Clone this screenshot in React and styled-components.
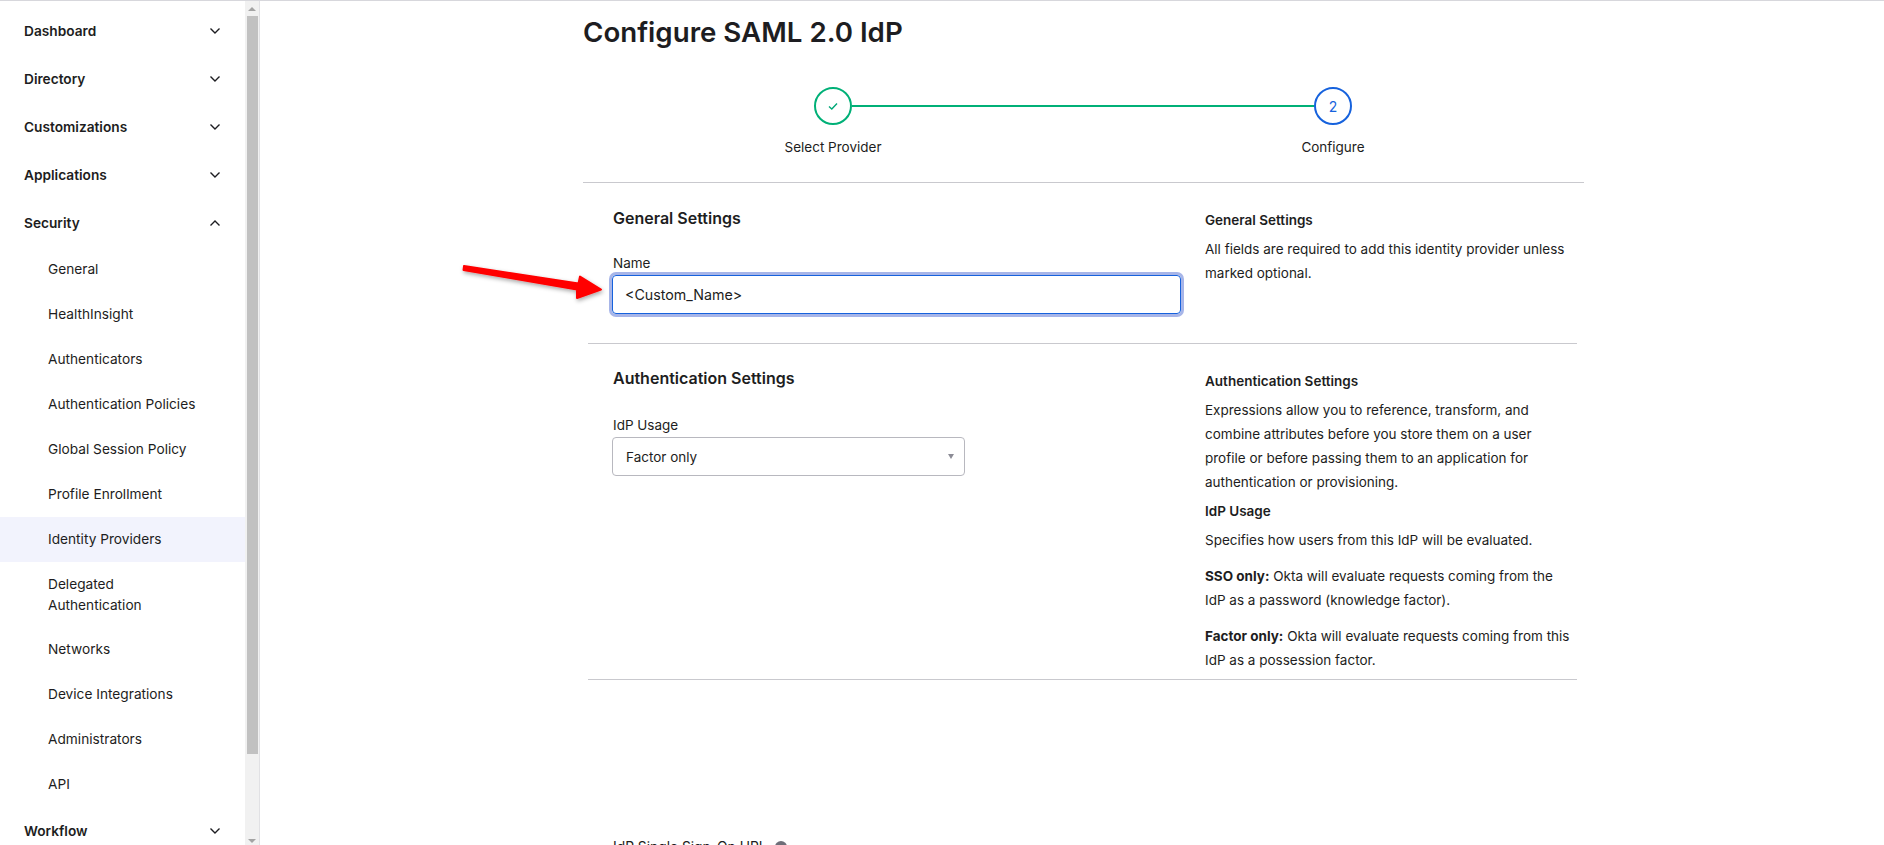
import React from "react";
import styled, { createGlobalStyle } from "styled-components";

const Global = createGlobalStyle`
  html, body { margin: 0; padding: 0; height: 100%; overflow: hidden; background: #fff; }
  body { font-family: Inter, "Liberation Sans", sans-serif; color: #1d1d21; }
  * { box-sizing: border-box; }
`;

const Page = styled.div`
  position: relative;
  display: flex;
  height: 845px;
  overflow: hidden;
  border-top: 1px solid #d7d7dc;
`;
const Sidebar = styled.nav`
  width: 245px;
  flex: none;
  overflow: hidden;
  padding-top: 6px;
`;
const NavHead = styled.div`
  display: flex;
  align-items: center;
  justify-content: space-between;
  height: 48px;
  padding: 0 24px;
  font-size: 13.7px;
  font-weight: 600;
  color: #1d1d21;
  svg { display: block; margin-right: -1px; }
`;
const NavItem = styled.div`
  padding: 12px 24px 12px 48px;
  font-size: 13.7px;
  line-height: 21px;
  height: ${(p) => (p.$tall ? "65px" : "45px")};
  color: #1d1d21;
  background: ${(p) => (p.$active ? "#f2f3fd" : "transparent")};
`;
const Scrollbar = styled.div`
  position: relative;
  width: 15px;
  flex: none;
  background: #f1f1f1;
  border-right: 1px solid #e1e1e4;
  display: flex;
  flex-direction: column;
  justify-content: space-between;
`;
const Thumb = styled.div`
  position: absolute;
  top: 15px;
  left: 2px;
  width: 11px;
  height: 738px;
  background: #c1c1c1;
`;
const ScrollArrow = styled.div`
  width: 0;
  height: 0;
  margin: 6px 0 0 3px;
  border-left: 4px solid transparent;
  border-right: 4px solid transparent;
  ${(p) => (p.$down ? "border-top: 4px solid #a3a3a3; margin: 0 0 2px 3px;" : "border-bottom: 4px solid #a3a3a3;")}
`;
const Main = styled.main`
  flex: 1;
  padding: 16px 0 0 323px;
  overflow: hidden;
`;
const Content = styled.div`
  width: 1001px;
`;
const Title = styled.h1`
  margin: 0;
  font-size: 27.7px;
  line-height: 30px;
  font-weight: 600;
  color: #1d1d21;
`;
const Stepper = styled.div`
  display: flex;
  margin-top: 40px;
  height: 96px;
  border-bottom: 1px solid #c9c9ce;
`;
const Step = styled.div`
  position: relative;
  width: 500px;
  display: flex;
  flex-direction: column;
  align-items: center;
`;
const Connector = styled.span`
  position: absolute;
  top: 18px;
  left: 269px;
  width: 463px;
  height: 2px;
  background: #00b077;
`;
const Circle = styled.div`
  position: relative;
  width: 38px;
  height: 38px;
  border-radius: 50%;
  border: 2px solid ${(p) => p.$color};
  color: ${(p) => p.$color};
  display: flex;
  align-items: center;
  justify-content: center;
  font-size: 14px;
  background: #fff;
`;
const StepLabel = styled.div`
  margin-top: 13px;
  font-size: 13.5px;
  line-height: 18px;
`;
const Section = styled.section`
  display: grid;
  grid-template-columns: 592px 1fr;
  margin: 0 7px 0 5px;
  padding: 0 0 0 25px;
  border-bottom: 1px solid #c9c9ce;
  height: ${(p) => p.$h}px;
`;
const FormCol = styled.div`
  padding-top: ${(p) => p.$pt}px;
`;
const HelpCol = styled.div`
  padding-top: ${(p) => p.$pt}px;
  width: 370px;
  font-size: 13.5px;
  line-height: 24px;
`;
const SectionTitle = styled.h2`
  margin: 0;
  font-size: 16px;
  line-height: 22px;
  font-weight: 600;
`;
const FieldLabel = styled.label`
  display: block;
  margin-top: ${(p) => p.$mt}px;
  font-size: 13.5px;
  line-height: 18px;
`;
const TextInput = styled.div`
  width: 569px;
  height: 39px;
  margin: 3px 0 0 -1px;
  border: 1px solid #1662dd;
  border-radius: 4px;
  box-shadow: 0 0 0 3px #a7b5e8;
  padding: 0 12px;
  display: flex;
  align-items: center;
  font-size: 14.25px;
`;
const SelectBox = styled.div`
  width: 353px;
  height: 39px;
  margin: 3px 0 0 -1px;
  border: 1px solid #b8b8bf;
  border-radius: 4px;
  padding: 0 10px 0 13px;
  display: flex;
  align-items: center;
  justify-content: space-between;
  font-size: 13.5px;
`;
const Caret = styled.span`
  width: 0;
  height: 0;
  border-left: 3px solid transparent;
  border-right: 3px solid transparent;
  border-top: 5px solid #8c8c96;
`;
const HelpTitle = styled.h3`
  margin: ${(p) => p.$mt ?? 0}px 0 ${(p) => p.$mb ?? 5}px;
  font-size: 13.5px;
  line-height: 24px;
  font-weight: 600;
`;
const HelpText = styled.p`
  margin: 0 0 ${(p) => p.$mb ?? 0}px;
`;
const Clipped = styled.div`
  margin: 158px 0 0 30px;
  display: flex;
  align-items: center;
  gap: 8px;
  font-size: 13.8px;
  line-height: 18px;
`;
const InfoDot = styled.span`
  width: 12px;
  height: 12px;
  border-radius: 50%;
  background: #6e6e78;
`;
const Arrow = styled.svg`
  position: absolute;
  left: 455px;
  top: 255px;
  pointer-events: none;
`;

const Chevron = ({ up }) => (
  <svg width="14" height="14" viewBox="0 0 14 14" fill="none" stroke="#1d1d21" strokeWidth="1.4">
    <path d={up ? "M2.5 9.5 7 5l4.5 4.5" : "M2.5 4.5 7 9l4.5-4.5"} />
  </svg>
);

const before = ["Dashboard", "Directory", "Customizations", "Applications"];
const subs = ["General", "HealthInsight", "Authenticators", "Authentication Policies", "Global Session Policy", "Profile Enrollment", "Identity Providers", "Delegated Authentication", "Networks", "Device Integrations", "Administrators", "API"];

export default function App() {
  return (
    <Page>
      <Global />
      <Sidebar>
        {before.map((t) => (
          <NavHead key={t}>{t}<Chevron /></NavHead>
        ))}
        <NavHead>Security<Chevron up /></NavHead>
        {subs.map((t) => (
          <NavItem key={t} $active={t === "Identity Providers"} $tall={t === "Delegated Authentication"}>
            {t === "Delegated Authentication" ? <>Delegated<br />Authentication</> : t}
          </NavItem>
        ))}
        <NavHead>Workflow<Chevron /></NavHead>
      </Sidebar>
      <Scrollbar>
        <ScrollArrow />
        <Thumb />
        <ScrollArrow $down />
      </Scrollbar>
      <Main>
        <Content>
          <Title>Configure SAML 2.0 IdP</Title>
          <Stepper>
            <Step>
              <Connector />
              <Circle $color="#00b077">
                <svg width="12" height="12" viewBox="0 0 12 12" fill="none" stroke="#00a878" strokeWidth="1.4"><path d="M2 6.5 4.8 9 10 3.5" /></svg>
              </Circle>
              <StepLabel>Select Provider</StepLabel>
            </Step>
            <Step>
              <Circle $color="#1662dd">2</Circle>
              <StepLabel>Configure</StepLabel>
            </Step>
          </Stepper>
          <Section $h={161}>
            <FormCol $pt={24}>
              <SectionTitle>General Settings</SectionTitle>
              <FieldLabel $mt={25}>Name</FieldLabel>
              <TextInput>&lt;Custom_Name&gt;</TextInput>
            </FormCol>
            <HelpCol $pt={25}>
              <HelpTitle>General Settings</HelpTitle>
              <HelpText>All fields are required to add this identity provider unless marked optional.</HelpText>
            </HelpCol>
          </Section>
          <Section $h={336}>
            <FormCol $pt={23}>
              <SectionTitle>Authentication Settings</SectionTitle>
              <FieldLabel $mt={27}>IdP Usage</FieldLabel>
              <SelectBox>Factor only<Caret /></SelectBox>
            </FormCol>
            <HelpCol $pt={25}>
              <HelpTitle>Authentication Settings</HelpTitle>
              <HelpText>Expressions allow you to reference, transform, and combine attributes before you store them on a user profile or before passing them to an application for authentication or provisioning.</HelpText>
              <HelpTitle $mt={5}>IdP Usage</HelpTitle>
              <HelpText $mb={12}>Specifies how users from this IdP will be evaluated.</HelpText>
              <HelpText $mb={12}><b>SSO only:</b> Okta will evaluate requests coming from the IdP as a password (knowledge factor).</HelpText>
              <HelpText><b>Factor only:</b> Okta will evaluate requests coming from this IdP as a possession factor.</HelpText>
            </HelpCol>
          </Section>
          <Clipped>IdP Single Sign-On URL<InfoDot /></Clipped>
        </Content>
      </Main>
      <Arrow width="160" height="55" viewBox="0 0 160 55">
        <defs>
          <filter id="arrowShadow" x="-10%" y="-40%" width="120%" height="200%">
            <feDropShadow dx="1" dy="2" stdDeviation="2" floodColor="#000" floodOpacity="0.35" />
          </filter>
        </defs>
        <g filter="url(#arrowShadow)" fill="#f00" stroke="#f00" strokeLinejoin="round">
          <path d="M9 10 8.5 14 122 33.5 122 42 146 33.5 125 20.5 123.5 27.5Z" strokeWidth="2" />
        </g>
      </Arrow>
    </Page>
  );
}
